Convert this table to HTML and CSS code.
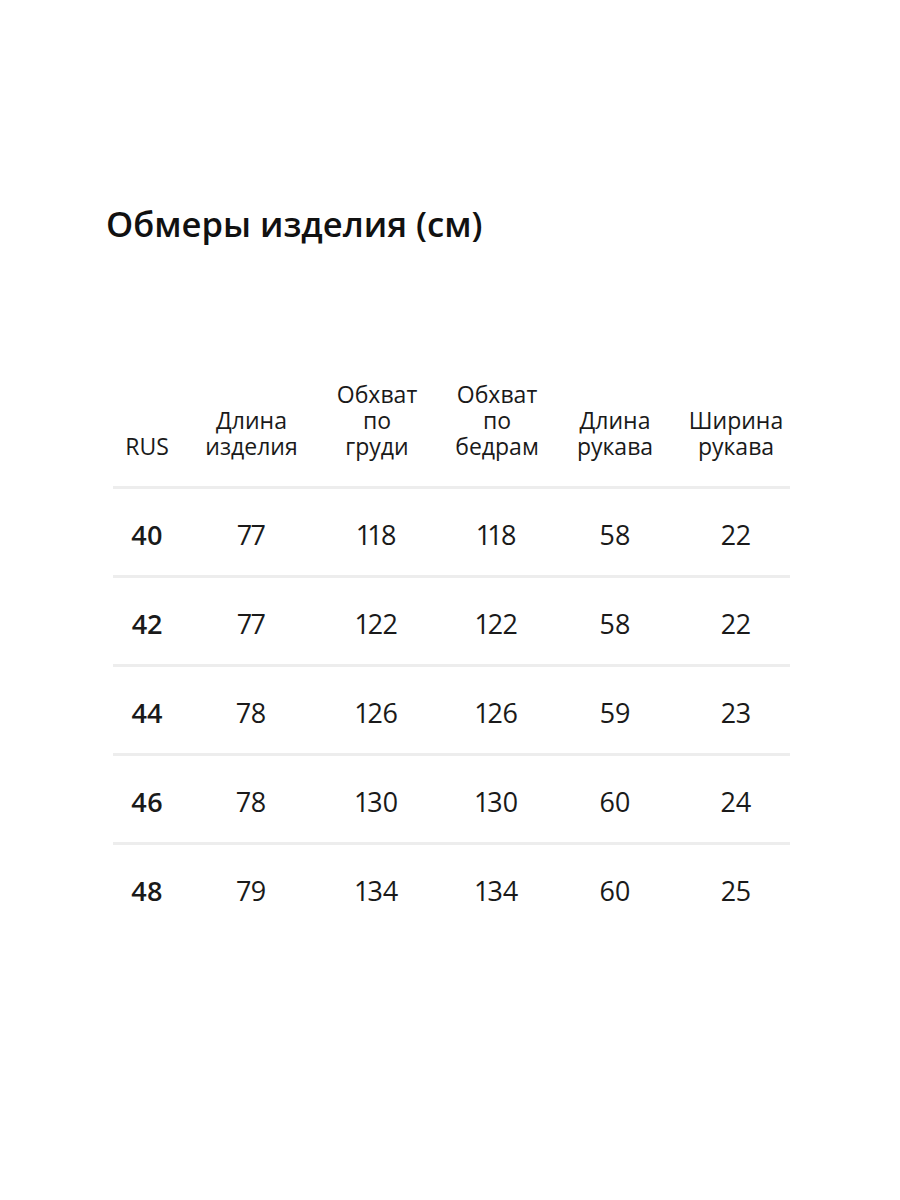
FILE: index.html
```html
<!DOCTYPE html>
<html lang="ru">
<head>
<meta charset="utf-8">
<link rel="stylesheet" href="styles.css">
</head>
<body>
<div class="page">
  <h1 class="title">Обмеры изделия (см)</h1>
  <div class="table">
    <div class="row head">
      <div class="cell">RUS</div>
      <div class="cell">Длина<br>изделия</div>
      <div class="cell">Обхват<br>по<br>груди</div>
      <div class="cell">Обхват<br>по<br>бедрам</div>
      <div class="cell">Длина<br>рукава</div>
      <div class="cell last">Ширина<br>рукава</div>
    </div>
    <div class="row">
      <div class="cell size">40</div><div class="cell">77</div><div class="cell">118</div><div class="cell">118</div><div class="cell">58</div><div class="cell last">22</div>
    </div>
    <div class="row">
      <div class="cell size">42</div><div class="cell">77</div><div class="cell">122</div><div class="cell">122</div><div class="cell">58</div><div class="cell last">22</div>
    </div>
    <div class="row">
      <div class="cell size">44</div><div class="cell">78</div><div class="cell">126</div><div class="cell">126</div><div class="cell">59</div><div class="cell last">23</div>
    </div>
    <div class="row">
      <div class="cell size">46</div><div class="cell">78</div><div class="cell">130</div><div class="cell">130</div><div class="cell">60</div><div class="cell last">24</div>
    </div>
    <div class="row final">
      <div class="cell size">48</div><div class="cell">79</div><div class="cell">134</div><div class="cell">134</div><div class="cell">60</div><div class="cell last">25</div>
    </div>
  </div>
</div>
</body>
</html>
```

FILE: styles.css
```css
html, body {
  margin: 0;
  padding: 0;
  background: #ffffff;
}
body {
  font-family: "Open Sans", "Noto Sans", sans-serif;
  color: #1a1a1a;
}
.page {
  width: 900px;
  height: 1200px;
  padding-top: 200px;
  box-sizing: border-box;
}
.title {
  margin: 0 0 0 106px;
  font-size: 34.6px;
  font-weight: 600;
  line-height: 48px;
  color: #111;
}
.table {
  margin-left: 113px;
  width: 677px;
  margin-top: 133px;
}
.row {
  display: grid;
  grid-template-columns: 68px 141px 110px 130px 106px 122px;
  align-items: center;
  height: 89px;
  padding-top: 6px;
  border-top: 3px solid #ededed;
  box-sizing: border-box;
}
.row.head {
  border-top: none;
  height: auto;
  align-items: end;
  padding-top: 0;
  padding-bottom: 27px;
}
.cell {
  text-align: center;
  font-size: 27px;
  line-height: 34px;
  color: #1a1a1a;
  font-variant-numeric: proportional-nums;
}
.head .cell {
  font-size: 23px;
  line-height: 26px;
}
.cell.last {
  padding-left: 14px;
}
.cell.size {
  font-weight: 600;
}
```
